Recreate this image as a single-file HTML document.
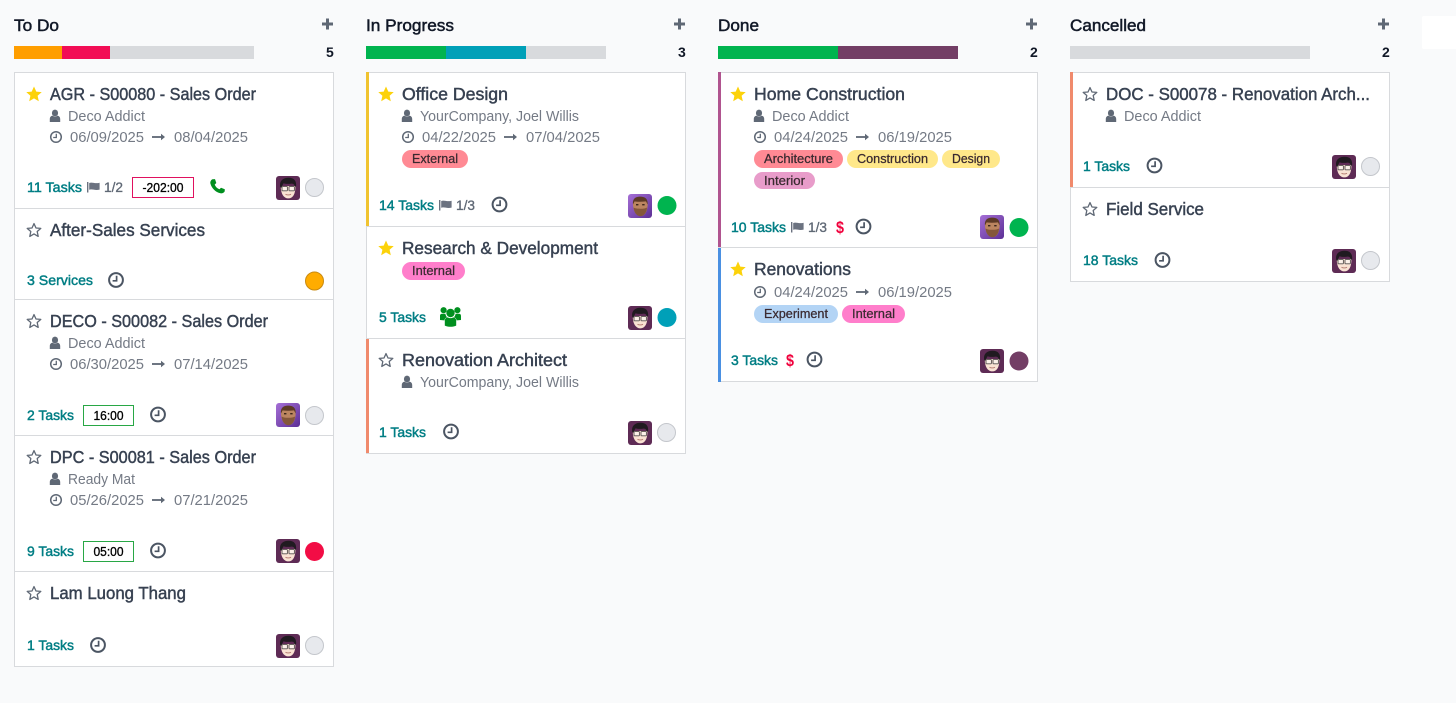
<!DOCTYPE html>
<html lang="en"><head><meta charset="utf-8"><title>Projects</title>
<style>
html,body{margin:0;padding:0;background:#f9fafb;width:1456px;height:703px;overflow:hidden}
svg{display:block}
text{font-family:"Liberation Sans",sans-serif}
.h{font-size:17px;fill:#111827;stroke:#111827;stroke-width:.5px}
.c{font-size:14px;font-weight:700;fill:#111827}
.t{font-size:17.5px;fill:#374151;stroke:#374151;stroke-width:.45px}
.s{font-size:14.5px;fill:#747a85}
.k{font-size:14px;fill:#017e84;stroke:#017e84;stroke-width:.45px}
.f{font-size:13.5px;fill:#5f6875;stroke:#5f6875;stroke-width:.3px}
.b{font-size:12.5px;fill:#000;stroke:#000;stroke-width:.3px;text-anchor:middle}
.g{font-size:12.5px;fill:#3a2a30;stroke:#3a2a30;stroke-width:.25px}
.d{font-size:17px;font-weight:700;fill:#f0003c}
.card{fill:#fff;stroke:#d8dadd;stroke-width:1}
.l{stroke:#d8dadd;stroke-width:1}
</style></head>
<body>
<svg width="1456" height="703" viewBox="0 0 1456 703" xmlns="http://www.w3.org/2000/svg">
<defs>
<g id="plus"><rect x="-5.5" y="-1.5" width="11" height="3" fill="#5f6875"/><rect x="-1.5" y="-5.5" width="3" height="11" fill="#5f6875"/></g>
<polygon id="star" points="0,-8 2.3,-2.9 7.7,-2.4 3.6,1.2 4.8,6.7 0,3.9 -4.8,6.7 -3.6,1.2 -7.7,-2.4 -2.3,-2.9" fill="#fcd20a"/>
<polygon id="ostar" points="0,-6.9 2,-2.5 6.8,-2.1 3.2,1 4.2,5.9 0,3.4 -4.2,5.9 -3.2,1 -6.8,-2.1 -2,-2.5" fill="none" stroke="#5f6875" stroke-width="1.3" stroke-linejoin="round"/>
<g id="person" fill="#5f6875"><ellipse cx="0" cy="-3" rx="3.1" ry="3.4"/><path d="M-5.2,6 V3 C-5.2,0.6 -3.6,-0.2 -2.2,-0.4 C-1,1 1,1 2.2,-0.4 C3.6,-0.2 5.2,0.6 5.2,3 V6 Z"/></g>
<g id="clk" fill="none" stroke="#5f6875"><circle r="5.3" stroke-width="1.5"/><path d="M0.3,-3.2 V0.5 H-2.8" stroke-width="1.3"/></g>
<g id="clock" fill="none" stroke="#4b5563"><circle r="6.9" stroke-width="2"/><path d="M0.6,-4.2 V0.8 H-3.4" stroke-width="1.7"/></g>
<g id="arrow" fill="#5f6875"><rect x="0" y="-.9" width="10" height="1.8"/><polygon points="9,-3.2 13,0 9,3.2"/></g>
<path id="flag" d="M0,0 H1.4 V10.5 H0 Z M2.2,1 C5,-.3 8,2 12.6,.7 V7.6 C8,8.8 5,6.6 2.2,7.8 Z" fill="#6b7280"/>
<path id="phone" d="M2.4,.2 L5,.1 L6.3,4 L4.7,5.6 C5.6,7.8 7.2,9.4 9.5,10.3 L11,8.8 L14.8,10.2 L14.7,12.4 C13.8,14 12,14.6 10.4,14.3 C5.6,13.2 1.6,9.2 .4,4.5 C0,3 .8,1 2.4,.2 Z" fill="#008f1f"/>
<g id="people" fill="#008f1f"><circle cx="3.6" cy="3.2" r="3.1"/><circle cx="17.4" cy="3.2" r="3.1"/><circle cx="10.5" cy="6" r="4.2"/><path d="M0,13 V9 C0,7.4 1,6.8 2.4,6.8 H5.4 C5.7,8.4 6.2,9.4 7,10.2 C5.4,10.8 4.6,11.6 4.4,13.4 Z"/><path d="M21,13 V9 C21,7.4 20,6.8 18.6,6.8 H15.6 C15.3,8.4 14.8,9.4 14,10.2 C15.6,10.8 16.4,11.6 16.6,13.4 Z"/><path d="M4.8,18.6 V14 C4.8,11.6 6.2,10.6 7.8,10.4 C9.4,11.4 11.6,11.4 13.2,10.4 C14.8,10.6 16.2,11.6 16.2,14 V18.6 C13,20.2 8,20.2 4.8,18.6 Z"/></g>
<g id="av1"><rect width="24" height="24" rx="3" fill="#5e2b55"/><path d="M4.8,10 C4.6,18 8,22.4 12.4,22.4 C16.8,22.4 19.6,18 19.4,10 Z" fill="#f9e2d3"/><path d="M4.4,11.5 C3,6 6,2 12,1.8 C17.5,1.4 21,4.5 20,11 L18.6,10 C18.4,8.2 17,7.6 15.5,7.6 C12.5,8 9,8 7.6,7.2 C6.8,8.4 6,9.8 5.8,11.5 Z" fill="#201a20"/><rect x="6" y="10.6" width="5.4" height="4.2" rx=".6" fill="#fff" fill-opacity=".5" stroke="#55504f" stroke-width=".9"/><rect x="13" y="10.6" width="5.4" height="4.2" rx=".6" fill="#fff" fill-opacity=".5" stroke="#55504f" stroke-width=".9"/><path d="M9.5,18.2 C11,19.2 13.5,19.2 15,18.2" stroke="#b0756a" stroke-width=".9" fill="none"/></g>
<linearGradient id="pg" x1="0" y1="0" x2="1" y2="1"><stop offset="0" stop-color="#a56fd6"/><stop offset="1" stop-color="#5c2f95"/></linearGradient>
<g id="av2"><rect width="24" height="24" rx="3" fill="url(#pg)"/><path d="M5,8 C5,3 19,3 19.6,8 C20,14 18.6,22 12.5,22 C6.6,22 4.6,14 5,8 Z" fill="#bb8560"/><path d="M5,10.5 C4.2,4 8.6,2.4 12.4,2.6 C16.4,2.6 20.2,4.4 19.6,10.5 L18,7.4 C14,7.8 10,7.8 6.6,7.4 Z" fill="#5d3a26"/><path d="M5.6,13.5 C7.4,15.2 17,15.2 19,13.5 C19,18 16,22.2 12.4,22.2 C8.6,22.2 5.8,18 5.6,13.5 Z" fill="#84573a"/><rect x="8" y="10" width="2.4" height="1.4" fill="#3a261c"/><rect x="14.2" y="10" width="2.4" height="1.4" fill="#3a261c"/></g>
</defs>

<rect width="1456" height="703" fill="#f9fafb"/>
<rect x="1422" y="16" width="40" height="33" rx="2" fill="#fff"/>

<!-- headers -->
<text class="h" x="14" y="31" textLength="45" lengthAdjust="spacingAndGlyphs">To Do</text>
<text class="h" x="366" y="31" textLength="88" lengthAdjust="spacingAndGlyphs">In Progress</text>
<text class="h" x="718" y="31" textLength="41" lengthAdjust="spacingAndGlyphs">Done</text>
<text class="h" x="1070" y="31" textLength="76" lengthAdjust="spacingAndGlyphs">Cancelled</text>
<use href="#plus" x="327.5" y="24"/><use href="#plus" x="679.5" y="24"/><use href="#plus" x="1031.5" y="24"/><use href="#plus" x="1383.5" y="24"/>

<!-- bars -->
<rect x="14" y="46" width="240" height="13" fill="#d8dadd"/><rect x="14" y="46" width="48" height="13" fill="#ff9e00"/><rect x="62" y="46" width="48" height="13" fill="#f20d55"/>
<rect x="366" y="46" width="240" height="13" fill="#d8dadd"/><rect x="366" y="46" width="80" height="13" fill="#00b44f"/><rect x="446" y="46" width="80" height="13" fill="#00a0b8"/>
<rect x="718" y="46" width="120" height="13" fill="#00b44f"/><rect x="838" y="46" width="120" height="13" fill="#733e65"/>
<rect x="1070" y="46" width="240" height="13" fill="#d8dadd"/>
<text class="c" x="326" y="57">5</text><text class="c" x="678" y="57">3</text><text class="c" x="1030" y="57">2</text><text class="c" x="1382" y="57">2</text>

<!-- COLUMN 1 -->
<rect class="card" x="14.5" y="72.5" width="319" height="594"/>
<line class="l" x1="15" x2="333" y1="208.5" y2="208.5"/><line class="l" x1="15" x2="333" y1="299.5" y2="299.5"/><line class="l" x1="15" x2="333" y1="435.5" y2="435.5"/><line class="l" x1="15" x2="333" y1="571.5" y2="571.5"/>

<use href="#star" x="34" y="94.5"/>
<text class="t" x="50" y="100" textLength="206" lengthAdjust="spacingAndGlyphs">AGR - S00080 - Sales Order</text>
<use href="#person" x="55" y="116"/><text class="s" x="68" y="121" textLength="77" lengthAdjust="spacingAndGlyphs">Deco Addict</text>
<use href="#clk" x="56" y="137"/><text class="s" x="70" y="142" textLength="74" lengthAdjust="spacingAndGlyphs">06/09/2025</text><use href="#arrow" x="152" y="137"/><text class="s" x="174" y="142" textLength="74" lengthAdjust="spacingAndGlyphs">08/04/2025</text>
<text class="k" x="27" y="192" textLength="55" lengthAdjust="spacingAndGlyphs">11 Tasks</text>
<use href="#flag" x="87" y="182"/><text class="f" x="104" y="192" textLength="19" lengthAdjust="spacingAndGlyphs">1/2</text>
<rect x="132.5" y="177.5" width="61" height="20" fill="#fff" stroke="#e0115f"/><text class="b" x="163" y="192" textLength="41" lengthAdjust="spacingAndGlyphs">-202:00</text>
<use href="#phone" x="210" y="179"/>
<use href="#av1" x="276" y="176"/><circle cx="314.5" cy="187.5" r="9" fill="#e7e9ed" stroke="#c4c7cc"/>

<use href="#ostar" x="34" y="230.5"/>
<text class="t" x="50" y="236" textLength="155" lengthAdjust="spacingAndGlyphs">After-Sales Services</text>
<text class="k" x="27" y="285" textLength="66" lengthAdjust="spacingAndGlyphs">3 Services</text>
<use href="#clock" x="116" y="280"/>
<circle cx="314.5" cy="281" r="9" fill="#ffac00" stroke="#c98a10"/>

<use href="#ostar" x="34" y="321.5"/>
<text class="t" x="50" y="327" textLength="218" lengthAdjust="spacingAndGlyphs">DECO - S00082 - Sales Order</text>
<use href="#person" x="55" y="343"/><text class="s" x="68" y="348" textLength="77" lengthAdjust="spacingAndGlyphs">Deco Addict</text>
<use href="#clk" x="56" y="364"/><text class="s" x="70" y="369" textLength="74" lengthAdjust="spacingAndGlyphs">06/30/2025</text><use href="#arrow" x="152" y="364"/><text class="s" x="174" y="369" textLength="74" lengthAdjust="spacingAndGlyphs">07/14/2025</text>
<text class="k" x="27" y="420" textLength="47" lengthAdjust="spacingAndGlyphs">2 Tasks</text>
<rect x="83.5" y="405.5" width="50" height="20" fill="#fff" stroke="#28a745"/><text class="b" x="108.5" y="420" textLength="30" lengthAdjust="spacingAndGlyphs">16:00</text>
<use href="#clock" x="158" y="414.5"/>
<use href="#av2" x="276" y="403"/><circle cx="314.5" cy="415.5" r="9" fill="#e7e9ed" stroke="#c4c7cc"/>

<use href="#ostar" x="34" y="457.5"/>
<text class="t" x="50" y="463" textLength="206" lengthAdjust="spacingAndGlyphs">DPC - S00081 - Sales Order</text>
<use href="#person" x="55" y="479"/><text class="s" x="68" y="484" textLength="67" lengthAdjust="spacingAndGlyphs">Ready Mat</text>
<use href="#clk" x="56" y="500"/><text class="s" x="70" y="505" textLength="74" lengthAdjust="spacingAndGlyphs">05/26/2025</text><use href="#arrow" x="152" y="500"/><text class="s" x="174" y="505" textLength="74" lengthAdjust="spacingAndGlyphs">07/21/2025</text>
<text class="k" x="27" y="556" textLength="47" lengthAdjust="spacingAndGlyphs">9 Tasks</text>
<rect x="83.5" y="541.5" width="50" height="20" fill="#fff" stroke="#28a745"/><text class="b" x="108.5" y="556" textLength="30" lengthAdjust="spacingAndGlyphs">05:00</text>
<use href="#clock" x="158" y="550.5"/>
<use href="#av1" x="276" y="539"/><circle cx="314.5" cy="551.5" r="9.5" fill="#f20d45"/>

<use href="#ostar" x="34" y="593.5"/>
<text class="t" x="50" y="599" textLength="136" lengthAdjust="spacingAndGlyphs">Lam Luong Thang</text>
<text class="k" x="27" y="650" textLength="47" lengthAdjust="spacingAndGlyphs">1 Tasks</text>
<use href="#clock" x="98" y="645"/>
<use href="#av1" x="276" y="634"/><circle cx="314.5" cy="645.5" r="9" fill="#e7e9ed" stroke="#c4c7cc"/>

<!-- COLUMN 2 -->
<rect class="card" x="366.5" y="72.5" width="319" height="381"/>
<line class="l" x1="367" x2="685" y1="226.5" y2="226.5"/><line class="l" x1="367" x2="685" y1="338.5" y2="338.5"/>
<rect x="366" y="72" width="3" height="154" fill="#f0c330"/><rect x="366" y="339" width="3" height="114" fill="#f08a6c"/>

<use href="#star" x="386" y="94.5"/>
<text class="t" x="402" y="100" textLength="106" lengthAdjust="spacingAndGlyphs">Office Design</text>
<use href="#person" x="407" y="116"/><text class="s" x="420" y="121" textLength="159" lengthAdjust="spacingAndGlyphs">YourCompany, Joel Willis</text>
<use href="#clk" x="408" y="137"/><text class="s" x="422" y="142" textLength="74" lengthAdjust="spacingAndGlyphs">04/22/2025</text><use href="#arrow" x="504" y="137"/><text class="s" x="526" y="142" textLength="74" lengthAdjust="spacingAndGlyphs">07/04/2025</text>
<rect x="402" y="150" width="66" height="18" rx="9" fill="#ff8a94"/><text class="g" x="412" y="163" textLength="46" lengthAdjust="spacingAndGlyphs">External</text>
<text class="k" x="379" y="210" textLength="55" lengthAdjust="spacingAndGlyphs">14 Tasks</text>
<use href="#flag" x="439" y="200"/><text class="f" x="456" y="210" textLength="19" lengthAdjust="spacingAndGlyphs">1/3</text>
<use href="#clock" x="499.5" y="204.5"/>
<use href="#av2" x="628" y="194"/><circle cx="667" cy="205.5" r="9.5" fill="#00b44f"/>

<use href="#star" x="386" y="248.5"/>
<text class="t" x="402" y="254" textLength="196" lengthAdjust="spacingAndGlyphs">Research &amp; Development</text>
<rect x="402" y="262" width="63" height="18" rx="9" fill="#ff7ecb"/><text class="g" x="412" y="275" textLength="43" lengthAdjust="spacingAndGlyphs">Internal</text>
<text class="k" x="379" y="322" textLength="47" lengthAdjust="spacingAndGlyphs">5 Tasks</text>
<use href="#people" x="440" y="307"/>
<use href="#av1" x="628" y="306"/><circle cx="667" cy="317.5" r="9.5" fill="#00a0b8"/>

<use href="#ostar" x="386" y="360.5"/>
<text class="t" x="402" y="366" textLength="165" lengthAdjust="spacingAndGlyphs">Renovation Architect</text>
<use href="#person" x="407" y="382"/><text class="s" x="420" y="387" textLength="159" lengthAdjust="spacingAndGlyphs">YourCompany, Joel Willis</text>
<text class="k" x="379" y="437" textLength="47" lengthAdjust="spacingAndGlyphs">1 Tasks</text>
<use href="#clock" x="451" y="431.5"/>
<use href="#av1" x="628" y="421"/><circle cx="666.5" cy="432.5" r="9" fill="#e7e9ed" stroke="#c4c7cc"/>

<!-- COLUMN 3 -->
<rect class="card" x="718.5" y="72.5" width="319" height="309"/>
<line class="l" x1="719" x2="1037" y1="247.5" y2="247.5"/>
<rect x="718" y="72" width="3" height="175" fill="#b0548f"/><rect x="718" y="248" width="3" height="134" fill="#4a90e2"/>

<use href="#star" x="738" y="94.5"/>
<text class="t" x="754" y="100" textLength="151" lengthAdjust="spacingAndGlyphs">Home Construction</text>
<use href="#person" x="759" y="116"/><text class="s" x="772" y="121" textLength="77" lengthAdjust="spacingAndGlyphs">Deco Addict</text>
<use href="#clk" x="760" y="137"/><text class="s" x="774" y="142" textLength="74" lengthAdjust="spacingAndGlyphs">04/24/2025</text><use href="#arrow" x="856" y="137"/><text class="s" x="878" y="142" textLength="74" lengthAdjust="spacingAndGlyphs">06/19/2025</text>
<rect x="754" y="150" width="89" height="18" rx="9" fill="#ff8a94"/><text class="g" x="764" y="163" textLength="69" lengthAdjust="spacingAndGlyphs">Architecture</text>
<rect x="847" y="150" width="91" height="18" rx="9" fill="#ffe88a"/><text class="g" x="857" y="163" textLength="71" lengthAdjust="spacingAndGlyphs">Construction</text>
<rect x="942" y="150" width="58" height="18" rx="9" fill="#ffe88a"/><text class="g" x="952" y="163" textLength="38" lengthAdjust="spacingAndGlyphs">Design</text>
<rect x="754" y="172" width="61" height="17" rx="8.5" fill="#e89cca"/><text class="g" x="764" y="185" textLength="41" lengthAdjust="spacingAndGlyphs">Interior</text>
<text class="k" x="731" y="232" textLength="55" lengthAdjust="spacingAndGlyphs">10 Tasks</text>
<use href="#flag" x="791" y="222"/><text class="f" x="808" y="232" textLength="19" lengthAdjust="spacingAndGlyphs">1/3</text>
<text class="d" x="836" y="233" textLength="8" lengthAdjust="spacingAndGlyphs">$</text>
<use href="#clock" x="863.5" y="226.5"/>
<use href="#av2" x="980" y="215"/><circle cx="1019" cy="227.5" r="9.5" fill="#00b44f"/>

<use href="#star" x="738" y="269.5"/>
<text class="t" x="754" y="275" textLength="97" lengthAdjust="spacingAndGlyphs">Renovations</text>
<use href="#clk" x="760" y="292"/><text class="s" x="774" y="297" textLength="74" lengthAdjust="spacingAndGlyphs">04/24/2025</text><use href="#arrow" x="856" y="292"/><text class="s" x="878" y="297" textLength="74" lengthAdjust="spacingAndGlyphs">06/19/2025</text>
<rect x="754" y="305" width="84" height="18" rx="9" fill="#b3d4f5"/><text class="g" x="764" y="318" textLength="64" lengthAdjust="spacingAndGlyphs">Experiment</text>
<rect x="842" y="305" width="63" height="18" rx="9" fill="#ff7ecb"/><text class="g" x="852" y="318" textLength="43" lengthAdjust="spacingAndGlyphs">Internal</text>
<text class="k" x="731" y="365" textLength="47" lengthAdjust="spacingAndGlyphs">3 Tasks</text>
<text class="d" x="786" y="366" textLength="8" lengthAdjust="spacingAndGlyphs">$</text>
<use href="#clock" x="814.5" y="359.5"/>
<use href="#av1" x="980" y="349"/><circle cx="1019" cy="361" r="9.5" fill="#733e65"/>

<!-- COLUMN 4 -->
<rect class="card" x="1070.5" y="72.5" width="319" height="209"/>
<line class="l" x1="1071" x2="1389" y1="187.5" y2="187.5"/>
<rect x="1070" y="72" width="3" height="115" fill="#f08a6c"/>

<use href="#ostar" x="1090" y="94.5"/>
<text class="t" x="1106" y="100" textLength="264" lengthAdjust="spacingAndGlyphs">DOC - S00078 - Renovation Arch...</text>
<use href="#person" x="1111" y="116"/><text class="s" x="1124" y="121" textLength="77" lengthAdjust="spacingAndGlyphs">Deco Addict</text>
<text class="k" x="1083" y="171" textLength="47" lengthAdjust="spacingAndGlyphs">1 Tasks</text>
<use href="#clock" x="1154.5" y="165.5"/>
<use href="#av1" x="1332" y="155"/><circle cx="1370.5" cy="166.5" r="9" fill="#e7e9ed" stroke="#c4c7cc"/>

<use href="#ostar" x="1090" y="209.5"/>
<text class="t" x="1106" y="215" textLength="98" lengthAdjust="spacingAndGlyphs">Field Service</text>
<text class="k" x="1083" y="265" textLength="55" lengthAdjust="spacingAndGlyphs">18 Tasks</text>
<use href="#clock" x="1162.5" y="260"/>
<use href="#av1" x="1332" y="249"/><circle cx="1370.5" cy="260.5" r="9" fill="#e7e9ed" stroke="#c4c7cc"/>
</svg>
</body></html>
